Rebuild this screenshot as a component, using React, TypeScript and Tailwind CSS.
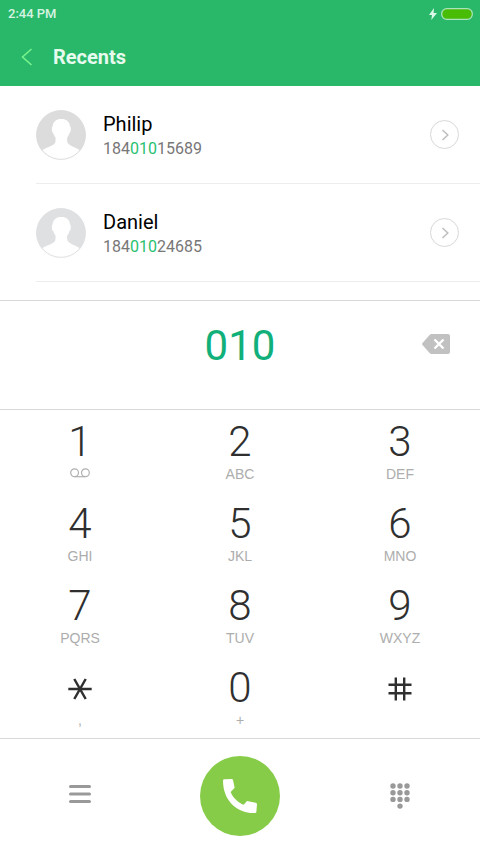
import React, { useState } from 'react';

type Contact = {
  name: string;
  number: string;
  avatarClass: string;
};

type Key = {
  value: string;
  letters?: string;
};

const contacts: Contact[] = [
  { name: 'Philip', number: '18401015689', avatarClass: 'text-[#dcdcdc]' },
  { name: 'Daniel', number: '18401024685', avatarClass: 'text-[#dfe0e2]' },
];

const keys: Key[] = [
  { value: '1' },
  { value: '2', letters: 'ABC' },
  { value: '3', letters: 'DEF' },
  { value: '4', letters: 'GHI' },
  { value: '5', letters: 'JKL' },
  { value: '6', letters: 'MNO' },
  { value: '7', letters: 'PQRS' },
  { value: '8', letters: 'TUV' },
  { value: '9', letters: 'WXYZ' },
  { value: '*', letters: ',' },
  { value: '0', letters: '+' },
  { value: '#' },
];

const StatusBar: React.FC = () => (
  <div className="flex h-7 items-center justify-between pr-[7px] pl-2 text-[13px] font-medium text-[#d6f3e2]">
    <span>2:44 PM</span>
    <div className="flex items-center gap-1">
      <svg className="h-3 w-2" viewBox="0 0 8 12" fill="#ddf8e8">
        <path d="M5 0L0 7h3L2.300 12L8 5H4.600z" />
      </svg>
      <svg className="h-3 w-8" viewBox="0 0 32 12">
        <rect
          x=".7"
          y=".7"
          width="30.600"
          height="10.600"
          rx="5"
          fill="#49bd06"
          stroke="#a9e3bb"
          strokeWidth="1.300"
        />
      </svg>
    </div>
  </div>
);

const Avatar: React.FC<{ className: string }> = ({ className }) => (
  <svg
    className={`size-[50px] shrink-0 ${className}`}
    viewBox="0 0 150 150"
  >
    <circle cx="75" cy="75" r="74" fill="currentColor" />
    <path
      fill="#fff"
      d="M76 27C60 27 51 35 50 49C46 52 47 68 52 70C54 77 57 80 59 84L58 97C55 108 32 111 17 122A74 74 0 0 0 133 122C118 111 98 108 94 97L93 84C96 80 98 77 100 70C105 68 106 52 102 49C101 35 91 27 76 27z"
    />
    <circle
      cx="75"
      cy="75"
      r="73"
      fill="none"
      stroke="currentColor"
      strokeWidth="3"
    />
  </svg>
);

// Colours the part of the number that was typed on the keypad
const MatchedNumber: React.FC<{ number: string; query: string }> = ({
  number,
  query,
}) => {
  const start = query ? number.indexOf(query) : -1;
  if (start < 0) return <>{number}</>;

  return (
    <>
      {number.slice(0, start)}
      <span className="text-[#27c16f]">{query}</span>
      {number.slice(start + query.length)}
    </>
  );
};

const ContactRow: React.FC<{ contact: Contact; query: string }> = ({
  contact,
  query,
}) => (
  <li className="ml-9 flex h-[98px] items-center border-b border-[#ededed] pr-[21px]">
    <Avatar className={contact.avatarClass} />
    <div className="ml-[17px] flex-1">
      <div className="text-xl leading-[26px] text-black">{contact.name}</div>
      <div className="mt-0.5 text-base leading-5 text-[#777]">
        <MatchedNumber number={contact.number} query={query} />
      </div>
    </div>
    <button
      aria-label={`Details for ${contact.name}`}
      className="flex size-[29px] items-center justify-center rounded-full border border-[#d8d8d8]"
    >
      <svg
        className="h-3 w-2"
        viewBox="0 0 8 12"
        fill="none"
        stroke="#bdbdbd"
        strokeWidth="1.500"
      >
        <path d="M1.500 1L6.800 6L1.500 11" />
      </svg>
    </button>
  </li>
);

const KeyFace: React.FC<{ value: string }> = ({ value }) => {
  if (value === '*') {
    return (
      <svg
        className="h-10 w-6"
        viewBox="0 0 24 40"
        stroke="#2f2f2f"
        strokeWidth="2.500"
      >
        <path d="M.3 21H23.700M6.300 11L17.700 31M17.700 11L6.300 31" />
      </svg>
    );
  }
  if (value === '#') {
    return (
      <svg
        className="h-10 w-6"
        viewBox="0 0 24 40"
        stroke="#2f2f2f"
        strokeWidth="2.400"
      >
        <path d="M.5 16.700H23.500M.5 25.200H23.500M7.800 9.500V32.500M16.200 9.500V32.500" />
      </svg>
    );
  }
  return (
    <span className="text-[42px] leading-10 font-light text-[#2f2f2f]">
      {value}
    </span>
  );
};

const Voicemail: React.FC = () => (
  <svg
    className="mt-1.5 h-[10px] w-5"
    viewBox="0 0 20 10"
    fill="none"
    stroke="#b0b0b0"
    strokeWidth="1.200"
  >
    <circle cx="4.600" cy="4.800" r="3.900" />
    <circle cx="15.400" cy="4.800" r="3.900" />
    <path d="M4.600 8.700H15.400" />
  </svg>
);

export default function App() {
  const [query, setQuery] = useState('010');

  return (
    <div className="flex min-h-screen flex-col bg-white font-['Roboto',sans-serif]">
      <header className="bg-[#29b869] pb-2">
        <StatusBar />
        <div className="flex h-[50px] items-center pt-2 pl-[21px]">
          <button aria-label="Back" className="w-8">
            <svg
              className="h-[18px] w-3"
              viewBox="0 0 12 18"
              fill="none"
              stroke="#7af58f"
              strokeWidth="1.500"
            >
              <path d="M10.500 1L1.500 9L10.500 17" />
            </svg>
          </button>
          <h1 className="text-xl font-bold text-[#e6faee]">Recents</h1>
        </div>
      </header>

      <ul className="pb-[18px]">
        {contacts.map((contact) => (
          <ContactRow key={contact.name} contact={contact} query={query} />
        ))}
      </ul>

      <div className="grid h-[109px] grid-cols-3 items-center border-t border-[#d9d9d9] pb-[18px]">
        <input
          type="tel"
          aria-label="Phone number"
          value={query}
          onChange={(e) => setQuery(e.target.value)}
          className="col-start-2 w-full text-center text-[42px] leading-12 text-[#11b07a] outline-none"
        />
        <button
          aria-label="Delete"
          className="mr-[30px] justify-self-end pb-1"
          onClick={() => setQuery(query.slice(0, -1))}
        >
          <svg className="h-5 w-7" viewBox="0 0 28 20">
            <path
              fill="#c1c1c1"
              d="M9.500 0H26A2 2 0 0 1 28 2V18A2 2 0 0 1 26 20H9.500Q8.500 20 7.800 19.200L.5 11Q-.3 10 .5 9L7.800 .8Q8.500 0 9.500 0z"
            />
            <path
              stroke="#fff"
              strokeWidth="2.400"
              d="M12.500 5.500L21.500 14.500M21.500 5.500L12.500 14.500"
            />
          </svg>
        </button>
      </div>

      <div className="grid grid-cols-3 border-y border-[#d9d9d9]">
        {keys.map((key) => (
          <button
            key={key.value}
            aria-label={key.value}
            onClick={() => setQuery(query + key.value)}
            className="flex h-[82px] flex-col items-center pt-3"
          >
            <KeyFace value={key.value} />
            {key.value === '1' && <Voicemail />}
            {key.letters && (
              <span className="font-['Liberation_Sans',sans-serif] text-sm leading-6 text-[#adadad]">
                {key.letters}
              </span>
            )}
          </button>
        ))}
      </div>

      <footer className="grid grid-cols-3 items-center justify-items-center pt-[17px] pb-4">
        <button aria-label="Menu" className="pb-1">
          <svg
            className="h-[22px] w-[22px]"
            viewBox="0 0 22 22"
            stroke="#999"
            strokeWidth="3"
            strokeLinecap="round"
          >
            <path d="M1.500 3.500H20.500M1.500 11H20.500M1.500 18.500H20.500" />
          </svg>
        </button>
        <button
          aria-label="Call"
          className="flex size-20 items-center justify-center rounded-full bg-[#86cc49]"
        >
          <svg className="size-10" viewBox="0 0 120 120" fill="#fff">
            <path d="M9 14Q9 10 13 10L35 9Q38 9 39 12L44 35L32 48C36 62 56 82 71 86L81 75L107 80Q111 81 111 85L109 108Q109 111 105 111C52 113 9 74 9 14z" />
          </svg>
        </button>
        <button aria-label="Hide keypad">
          <svg className="h-[26px] w-5" viewBox="0 0 20 26" fill="#999">
            {[3, 10, 17].map((x) =>
              [3, 9.7, 16.4].map((y) => (
                <circle key={`${x}-${y}`} cx={x} cy={y} r="2.700" />
              ))
            )}
            <circle cx="10" cy="23.100" r="2.700" />
          </svg>
        </button>
      </footer>
    </div>
  );
}
